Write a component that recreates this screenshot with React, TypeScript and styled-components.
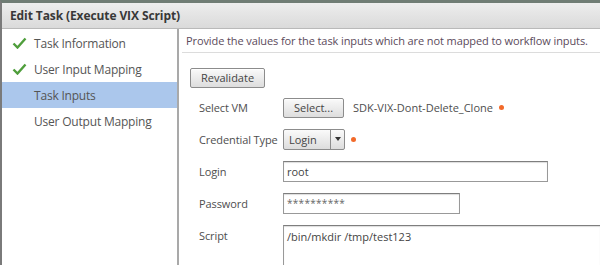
import React from "react";
import styled, { createGlobalStyle } from "styled-components";

const Global = createGlobalStyle`
  html, body {
    margin: 0;
    padding: 0;
    background: #fff;
  }
  body {
    font-family: "Open Sans", "Liberation Sans", sans-serif;
  }
`;

const Frame = styled.div`
  width: 600px;
  height: 265px;
  overflow: hidden;
  box-sizing: border-box;
  border-top: 3px solid #6f7c74;
  border-left: 2px solid #7a7a7a;
  display: flex;
  flex-direction: column;
  background: #fff;
`;

const Header = styled.div`
  height: 25px;
  flex: none;
  display: flex;
  align-items: center;
  padding-left: 8px;
  background: linear-gradient(#ededed, #dadada);
  border-bottom: 1px solid #b9b9b9;
  font-size: 12px;
  font-weight: 700;
  color: #383838;
  letter-spacing: -0.1px;
`;

const Body = styled.div`
  flex: 1;
  display: flex;
  min-height: 0;
`;

const Sidebar = styled.div`
  width: 175px;
  flex: none;
  padding-top: 1px;
  border-right: 2px solid #a9a9a9;
  background: #fff;
`;

const NavItem = styled.div<{ active?: boolean }>`
  height: 26px;
  display: flex;
  align-items: center;
  padding-left: 32px;
  position: relative;
  font-size: 12px;
  letter-spacing: -0.2px;
  color: #555;
  background: ${(p) => (p.active ? "#abc7ec" : "transparent")};
`;

const Check = styled.svg`
  position: absolute;
  left: 10px;
  top: 7px;
`;

const Content = styled.div`
  flex: 1;
  min-width: 0;
  padding-left: 3px;
`;

const Intro = styled.div`
  height: 23px;
  padding-left: 4px;
  display: flex;
  align-items: center;
  font-size: 11px;
  letter-spacing: -0.1px;
  color: #5b4a5b;
  border-bottom: 1px solid #dcdcdc;
  white-space: nowrap;
`;

const Form = styled.div`
  padding: 12px 0 0 8px;
`;

const Button = styled.button`
  font-family: inherit;
  font-size: 11px;
  color: #444;
  height: 20px;
  padding: 0 10px;
  border: 1px solid #8c8c8c;
  border-radius: 2px;
  background: linear-gradient(#fafafa, #dddddd);
  box-shadow: inset 0 1px 0 #fff;
  display: inline-flex;
  align-items: center;
`;

const Fields = styled.div`
  padding: 10px 0 0 9px;
  display: flex;
  flex-direction: column;
  gap: 11px;
`;

const Row = styled.div<{ top?: boolean }>`
  display: flex;
  align-items: ${(p) => (p.top ? "flex-start" : "center")};
`;

const Label = styled.div<{ top?: boolean }>`
  width: 84px;
  flex: none;
  font-size: 11px;
  letter-spacing: -0.1px;
  color: #4e4e4e;
  padding-top: ${(p) => (p.top ? "3px" : "0")};
  white-space: nowrap;
`;

const Value = styled.span`
  font-size: 11px;
  color: #4e4e4e;
  margin-left: 9px;
`;

const Required = styled.span`
  display: inline-block;
  width: 5px;
  height: 5px;
  border-radius: 50%;
  background: #f26a2a;
  margin-left: 6px;
`;

const Select = styled.div`
  height: 19px;
  width: 60px;
  display: flex;
  border: 1px solid #8c8c8c;
  border-radius: 2px;
  background: linear-gradient(#fafafa, #dddddd);
  font-size: 11px;
  color: #444;
`;

const SelectText = styled.div`
  flex: 1;
  display: flex;
  align-items: center;
  padding-left: 5px;
  border-right: 1px solid #8c8c8c;
`;

const SelectArrow = styled.div`
  width: 13px;
  display: flex;
  align-items: center;
  justify-content: center;
  &::after {
    content: "";
    border-left: 3px solid transparent;
    border-right: 3px solid transparent;
    border-top: 4px solid #333;
  }
`;

const Input = styled.div<{ w: number }>`
  width: ${(p) => p.w}px;
  height: 19px;
  box-sizing: content-box;
  border: 1px solid #999;
  border-top-color: #7e7e7e;
  box-shadow: inset 0 1px 1px #ddd;
  display: flex;
  align-items: center;
  padding-left: 3px;
  font-size: 11px;
  color: #444;
`;

const Secret = styled.span`
  font-size: 10px;
  letter-spacing: 0.3px;
  color: #666;
`;

const Textarea = styled.div`
  flex: 1;
  height: 60px;
  border: 1px solid #999;
  border-top-color: #7e7e7e;
  border-right: none;
  box-shadow: inset 0 1px 1px #ddd;
  padding: 3px 0 0 3px;
  font-size: 11px;
  color: #444;
`;

const CheckIcon = () => (
  <Check width="15" height="12" viewBox="0 0 15 12">
    <path d="M1.5 6.5 L5.5 10.5 L13.5 1.5" fill="none" stroke="#4f9e3c" strokeWidth="2.4" />
  </Check>
);

export default function App() {
  return (
    <>
      <Global />
      <Frame>
        <Header>Edit Task (Execute VIX Script)</Header>
        <Body>
          <Sidebar>
            <NavItem>
              <CheckIcon />
              Task Information
            </NavItem>
            <NavItem>
              <CheckIcon />
              User Input Mapping
            </NavItem>
            <NavItem active>Task Inputs</NavItem>
            <NavItem>User Output Mapping</NavItem>
          </Sidebar>
          <Content>
            <Intro>Provide the values for the task inputs which are not mapped to workflow inputs.</Intro>
            <Form>
              <Button>Revalidate</Button>
              <Fields>
                <Row>
                  <Label>Select VM</Label>
                  <Button>Select...</Button>
                  <Value>SDK-VIX-Dont-Delete_Clone</Value>
                  <Required />
                </Row>
                <Row>
                  <Label>Credential Type</Label>
                  <Select>
                    <SelectText>Login</SelectText>
                    <SelectArrow />
                  </Select>
                  <Required />
                </Row>
                <Row>
                  <Label>Login</Label>
                  <Input w={260}>root</Input>
                </Row>
                <Row>
                  <Label>Password</Label>
                  <Input w={172}>
                    <Secret>**********</Secret>
                  </Input>
                </Row>
                <Row top>
                  <Label top>Script</Label>
                  <Textarea>/bin/mkdir /tmp/test123</Textarea>
                </Row>
              </Fields>
            </Form>
          </Content>
        </Body>
      </Frame>
    </>
  );
}
